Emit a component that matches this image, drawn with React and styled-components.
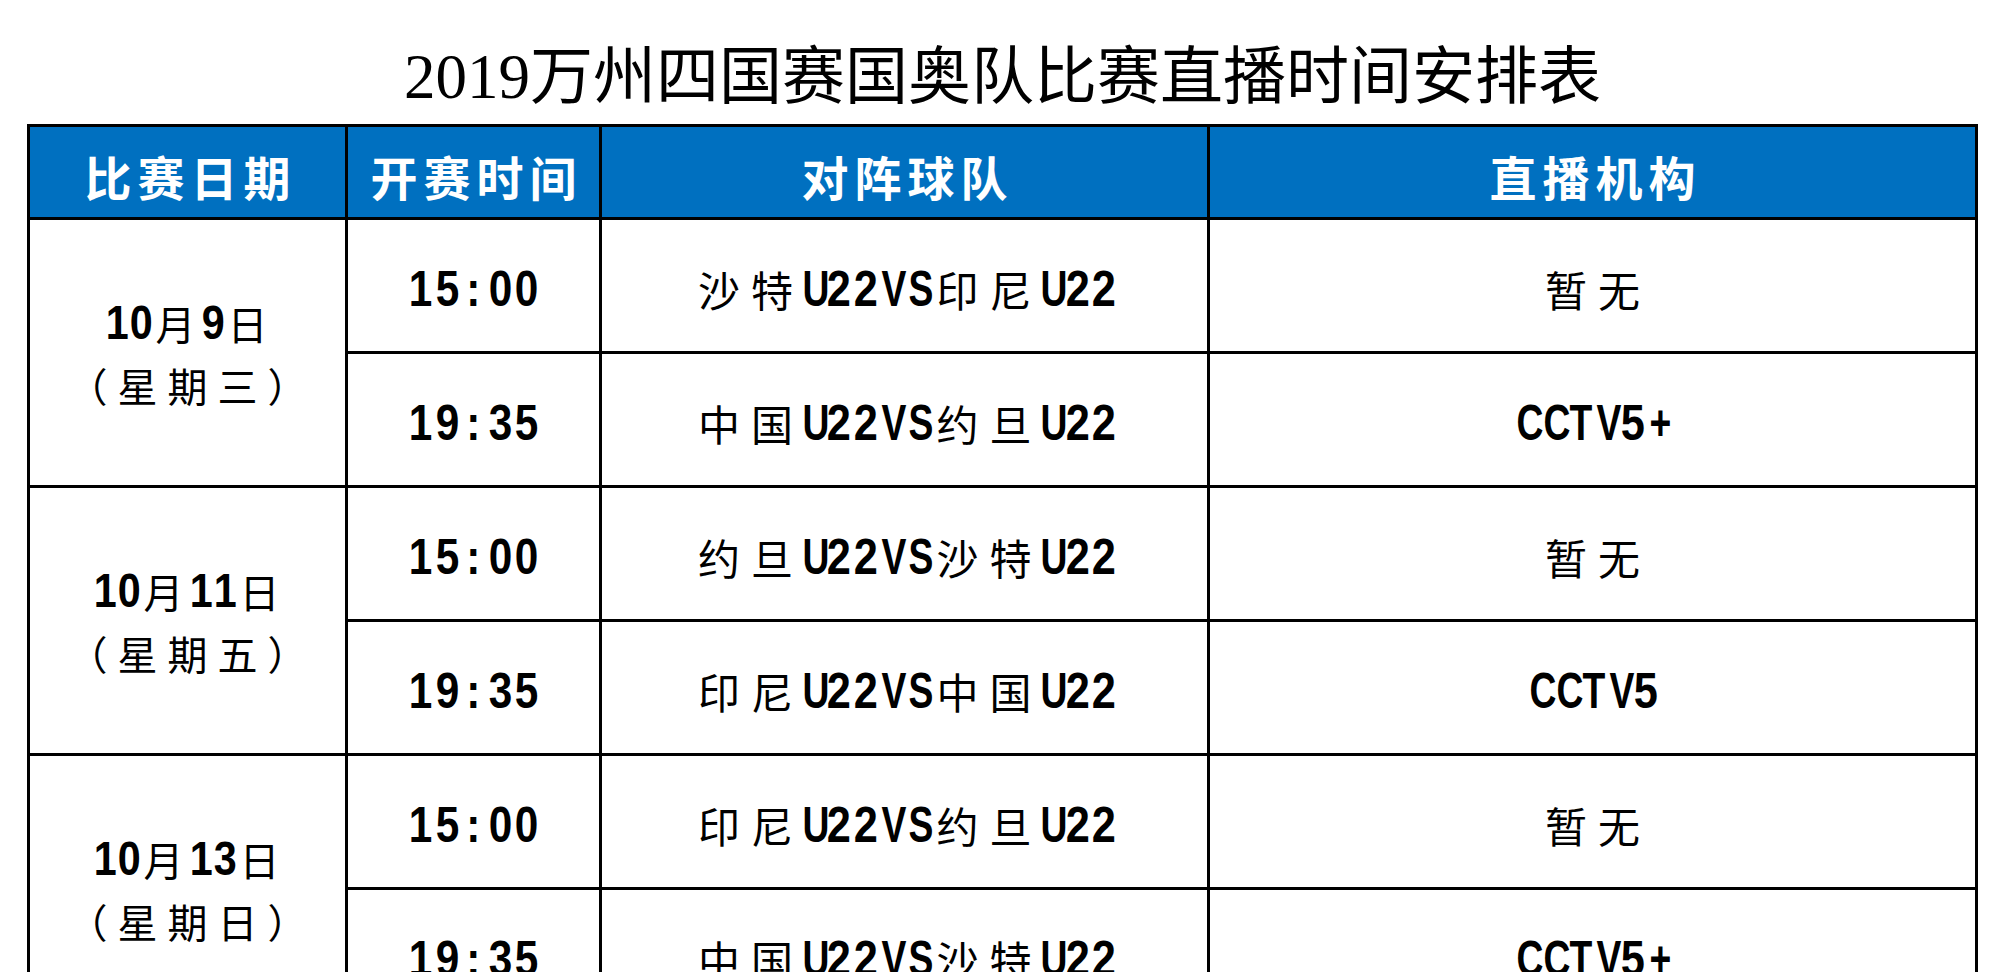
import React from "react";
import styled, { createGlobalStyle } from "styled-components";

const GlobalStyle = createGlobalStyle`
  html, body {
    margin: 0;
    padding: 0;
    background: #ffffff;
    height: 972px;
    overflow: hidden;
  }
  body {
    font-family: "Liberation Sans", "Noto Sans CJK SC", sans-serif;
    color: #000;
  }
`;

const Page = styled.div`
  width: 2000px;
  height: 972px;
  box-sizing: border-box;
  padding-left: 27px;
  overflow: hidden;
`;

const Title = styled.h1`
  margin: 0;
  width: 1951px;
  height: 124px;
  box-sizing: border-box;
  padding-top: 46px;
  text-align: center;
  font-family: "Liberation Serif", "Noto Sans CJK SC", serif;
  font-weight: 400;
  font-size: 63px;
  line-height: 63px;
  color: #000;
  white-space: nowrap;
`;

const Grid = styled.div`
  display: grid;
  grid-template-columns: 315px 251px 605px 765px;
  grid-template-rows: 90px;
  grid-auto-rows: 131px;
  gap: 3px;
  padding: 3px;
  width: max-content;
  background: #000;
`;

const HeaderCell = styled.div`
  background: #0070c0;
  color: #ffffff;
  display: flex;
  align-items: center;
  justify-content: center;
  padding: 6px 0 0 6px;
  box-sizing: border-box;
  font-family: "Noto Sans CJK SC", sans-serif;
  font-weight: 700;
  font-size: 47px;
  letter-spacing: 6px;
  line-height: 1;
`;

const Cell = styled.div`
  background: #ffffff;
  display: flex;
  align-items: center;
  justify-content: center;
  padding-top: 7px;
  box-sizing: border-box;
  white-space: nowrap;
  font-size: ${(p) => p.$size}px;
  line-height: 1;
`;

const DateCell = styled.div`
  grid-row: span 2;
  background: #ffffff;
  display: flex;
  flex-direction: column;
  align-items: center;
  justify-content: center;
  font-size: 40px;
  line-height: 1;
  padding-top: 3px;
  box-sizing: border-box;
`;

const DateLine = styled.div`
  height: 62px;
  display: flex;
  align-items: center;
  white-space: nowrap;
`;

const scales = { wide: "none", digit: "scaleX(0.86)", letter: "scaleX(0.74)" };

const Glyph = styled.span`
  display: inline-block;
  width: ${(p) => p.$w}px;
  text-align: center;
  font-family: ${(p) =>
    p.$kind === "wide"
      ? `"Noto Sans CJK SC", sans-serif`
      : `"Liberation Sans", "Noto Sans CJK SC", sans-serif`};
  font-weight: ${(p) => (p.$kind === "wide" ? 400 : 700)};
  font-size: ${(p) => (p.$kind === "wide" ? "1em" : "1.2em")};
  transform: ${(p) => scales[p.$kind]};
`;

const isWide = (ch) => /[\u2E80-\u9FFF\u3000-\u303F\uFF00-\uFF60]/.test(ch);

function Mono({ text, half }) {
  return (
    <>
      {Array.from(text).map((ch, i) => {
        const kind = isWide(ch) ? "wide" : /[A-Z+]/.test(ch) ? "letter" : "digit";
        return (
          <Glyph key={i} $w={kind === "wide" ? half * 2 : half} $kind={kind}>
            {ch}
          </Glyph>
        );
      })}
    </>
  );
}

const headers = ["比赛日期", "开赛时间", "对阵球队", "直播机构"];

const schedule = [
  {
    date: "10月9日",
    week: "（星期三）",
    games: [
      ["15:00", "沙特U22VS印尼U22", "暂无"],
      ["19:35", "中国U22VS约旦U22", "CCTV5+"],
    ],
  },
  {
    date: "10月11日",
    week: "（星期五）",
    games: [
      ["15:00", "约旦U22VS沙特U22", "暂无"],
      ["19:35", "印尼U22VS中国U22", "CCTV5"],
    ],
  },
  {
    date: "10月13日",
    week: "（星期日）",
    games: [
      ["15:00", "印尼U22VS约旦U22", "暂无"],
      ["19:35", "中国U22VS沙特U22", "CCTV5+"],
    ],
  },
];

export default function App() {
  return (
    <Page>
      <GlobalStyle />
      <Title>2019万州四国赛国奥队比赛直播时间安排表</Title>
      <Grid>
        {headers.map((h) => (
          <HeaderCell key={h}>{h}</HeaderCell>
        ))}
        {schedule.map((day) => (
          <React.Fragment key={day.date}>
            <DateCell>
              <DateLine>
                <Mono text={day.date} half={24} />
              </DateLine>
              <DateLine>
                <Mono text={day.week} half={25} />
              </DateLine>
            </DateCell>
            {day.games.map((g, gi) => (
              <React.Fragment key={gi}>
                <Cell $size={41}>
                  <Mono text={g[0]} half={26.5} />
                </Cell>
                <Cell $size={42}>
                  <Mono text={g[1]} half={26.5} />
                </Cell>
                <Cell $size={42}>
                  <Mono text={g[2]} half={26.5} />
                </Cell>
              </React.Fragment>
            ))}
          </React.Fragment>
        ))}
      </Grid>
    </Page>
  );
}
